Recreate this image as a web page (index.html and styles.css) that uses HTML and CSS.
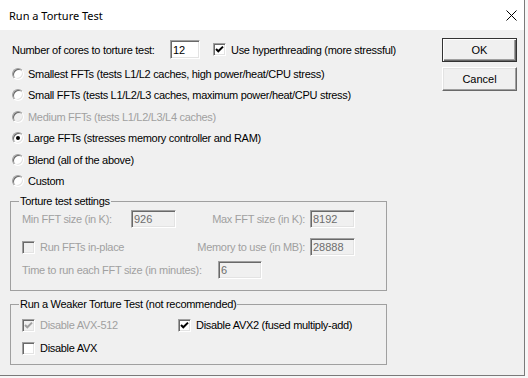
FILE: index.html
```html
<!DOCTYPE html>
<html lang="en">
<head>
    <meta charset="UTF-8">
    <title>Run a Torture Test</title>
    <link rel="stylesheet" href="styles.css">
</head>
<body>
    <div class="window">
        <div class="titlebar">
            <span class="title">Run a Torture Test</span>
            <svg class="close" width="11" height="11" viewBox="0 0 11 11">
                <path d="M0.5 0.5L10.5 10.5M10.5 0.5L0.5 10.5" stroke="#000" stroke-width="1"/>
            </svg>
        </div>

        <div class="dialog">
            <div class="main">
                <div class="cores-row">
                    <span class="cores-label">Number of cores to torture test:</span>
                    <input class="edit cores-edit" type="text" value="12">
                    <span class="check checked ht-check">
                        <svg width="9" height="9" viewBox="0 0 9 9"><path d="M1 4L3.3 6.3L8 1.6" stroke="#000" stroke-width="2" fill="none"/></svg>
                    </span>
                    <span class="check-text">Use hyperthreading (more stressful)</span>
                </div>

                <div class="option first">
                    <span class="radio"></span>
                    <span class="option-text">Smallest FFTs (tests L1/L2 caches, high power/heat/CPU stress)</span>
                </div>
                <div class="option">
                    <span class="radio"></span>
                    <span class="option-text">Small FFTs (tests L1/L2/L3 caches, maximum power/heat/CPU stress)</span>
                </div>
                <div class="option disabled">
                    <span class="radio"></span>
                    <span class="option-text">Medium FFTs (tests L1/L2/L3/L4 caches)</span>
                </div>
                <div class="option">
                    <span class="radio selected"></span>
                    <span class="option-text">Large FFTs (stresses memory controller and RAM)</span>
                </div>
                <div class="option">
                    <span class="radio"></span>
                    <span class="option-text">Blend (all of the above)</span>
                </div>
                <div class="option">
                    <span class="radio"></span>
                    <span class="option-text">Custom</span>
                </div>

                <fieldset class="group settings">
                    <legend>Torture test settings</legend>
                    <div class="fft-grid">
                        <span class="dim">Min FFT size (in K):</span>
                        <input class="edit" type="text" value="926" disabled>
                        <span class="dim right">Max FFT size (in K):</span>
                        <input class="edit" type="text" value="8192" disabled>

                        <div class="check-row span2">
                            <span class="check off"></span>
                            <span class="check-text dim">Run FFTs in-place</span>
                        </div>
                        <span class="dim right">Memory to use (in MB):</span>
                        <input class="edit" type="text" value="28888" disabled>
                    </div>
                    <div class="time-row">
                        <span class="dim time-label">Time to run each FFT size (in minutes):</span>
                        <input class="edit" type="text" value="6" disabled>
                    </div>
                </fieldset>

                <fieldset class="group weaker">
                    <legend>Run a Weaker Torture Test (not recommended)</legend>
                    <div class="avx-row">
                        <div class="check-row avx512">
                            <span class="check checked off">
                                <svg width="9" height="9" viewBox="0 0 9 9"><path d="M1 4L3.3 6.3L8 1.6" stroke="#a0a0a0" stroke-width="2" fill="none"/></svg>
                            </span>
                            <span class="check-text dim">Disable AVX-512</span>
                        </div>
                        <div class="check-row">
                            <span class="check checked">
                                <svg width="9" height="9" viewBox="0 0 9 9"><path d="M1 4L3.3 6.3L8 1.6" stroke="#000" stroke-width="2" fill="none"/></svg>
                            </span>
                            <span class="check-text">Disable AVX2 (fused multiply-add)</span>
                        </div>
                    </div>
                    <div class="avx-row second">
                        <div class="check-row">
                            <span class="check"></span>
                            <span class="check-text">Disable AVX</span>
                        </div>
                    </div>
                </fieldset>
            </div>

            <div class="buttons">
                <button class="btn default">OK</button>
                <button class="btn">Cancel</button>
            </div>
        </div>
    </div>
</body>
</html>
```

FILE: styles.css
```css
body {
    margin: 0;
    padding: 0;
    background-color: #f7f7f7;
    font-family: "Liberation Sans", Arial, sans-serif;
    font-size: 11px;
    letter-spacing: -0.3px;
    color: #000;
}

.window {
    width: 524px;
    height: 375px;
    background-color: #f0f0f0;
    border-right: 1px solid #7a7a7a;
    border-bottom: 1px solid #7a7a7a;
}

.titlebar {
    height: 30px;
    background-color: #fff;
    display: flex;
    align-items: center;
    justify-content: space-between;
    padding: 0 7px 0 9px;
}

.title {
    font-family: "Noto Sans", sans-serif;
    font-size: 11px;
    letter-spacing: 0;
}

.close {
    display: block;
}

.dialog {
    display: flex;
    padding: 8px 0 0 10px;
}

.main {
    width: 377px;
}

.buttons {
    margin-left: 55px;
    display: flex;
    flex-direction: column;
    gap: 5px;
}

/* edit boxes */
.edit {
    box-sizing: border-box;
    height: 18px;
    margin: 0;
    padding: 0 2px;
    font-family: "Liberation Sans", Arial, sans-serif;
    font-size: 11px;
    color: #000;
    background-color: #fff;
    border: 1px solid;
    border-color: #a0a0a0 #fff #fff #a0a0a0;
    box-shadow: inset 1px 1px 0 #696969, inset -1px -1px 0 #e3e3e3;
    outline: none;
}

.edit:disabled {
    background-color: #f0f0f0;
    color: #6d6d6d;
}

/* top row */
.cores-row {
    display: flex;
    align-items: center;
    height: 19px;
    margin-top: 2px;
    padding-left: 2px;
}

.cores-label {
    width: 158px;
    flex-shrink: 0;
    white-space: nowrap;
}

.cores-edit {
    width: 30px;
    height: 19px;
}

.ht-check {
    margin-left: 13px;
}

/* checkboxes */
.check {
    box-sizing: border-box;
    width: 13px;
    height: 13px;
    display: flex;
    align-items: center;
    justify-content: center;
    background-color: #fff;
    border: 1px solid;
    border-color: #a0a0a0 #fff #fff #a0a0a0;
    box-shadow: inset 1px 1px 0 #696969, inset -1px -1px 0 #e3e3e3;
    flex-shrink: 0;
}

.check.off {
    background-color: #f0f0f0;
}

.check svg {
    display: block;
}

.check-text {
    margin-left: 5px;
    white-space: nowrap;
}

.check-row {
    display: flex;
    align-items: center;
    height: 16px;
}

/* radio options */
.option {
    display: flex;
    align-items: center;
    height: 21.5px;
    padding-left: 2px;
}

.option.first {
    margin-top: 4px;
}

.radio {
    box-sizing: border-box;
    width: 12px;
    height: 12px;
    border-radius: 50%;
    background-color: #fff;
    border: 1px solid;
    border-color: #a0a0a0 #fff #fff #a0a0a0;
    box-shadow: inset 1px 1px 0 #696969, inset -1px -1px 0 #e3e3e3;
    display: flex;
    align-items: center;
    justify-content: center;
}

.radio.selected::after {
    content: "";
    width: 4px;
    height: 4px;
    border-radius: 50%;
    background-color: #000;
}

.option.disabled .radio {
    background-color: #f0f0f0;
}

.option-text {
    margin-left: 4px;
    white-space: nowrap;
}

.option.disabled .option-text,
.dim {
    color: #a0a0a0;
}

/* group boxes */
.group {
    box-sizing: border-box;
    width: 377px;
    margin: 0;
    padding: 0 0 0 11px;
    border: 1px solid #a0a0a0;
    min-inline-size: 0;
}

.group legend {
    padding: 0 1px;
    margin-left: -3px;
    line-height: 13px;
}

.settings {
    margin-top: 2.5px;
    padding-bottom: 10.5px;
}

.fft-grid {
    display: grid;
    grid-template-columns: 109px 45px 134px 45px;
    grid-auto-rows: 18px;
    row-gap: 10px;
    align-items: center;
    margin-top: 2.5px;
}

.fft-grid .edit {
    width: 45px;
}

.span2 {
    grid-column: span 2;
}

.right {
    text-align: right;
    padding-right: 5px;
}

.time-row {
    display: flex;
    align-items: center;
    height: 18px;
    margin-top: 5px;
}

.time-label {
    width: 196px;
}

.time-row .edit {
    width: 44px;
}

.weaker {
    margin-top: 7px;
    padding-bottom: 7.5px;
}

.avx-row {
    display: flex;
    margin-top: 6.5px;
}

.avx-row.second {
    margin-top: 7px;
}

.avx512 {
    width: 156px;
}

/* buttons */
.btn {
    box-sizing: border-box;
    width: 75px;
    height: 24px;
    padding: 0;
    font-family: "Liberation Sans", Arial, sans-serif;
    font-size: 11px;
    color: #000;
    background-color: #f0f0f0;
    border: 1px solid;
    border-color: #fff #696969 #696969 #fff;
    box-shadow: inset -1px -1px 0 #a0a0a0, inset 1px 1px 0 #e3e3e3;
}

.btn.default {
    border: 1px solid #333;
    box-shadow: inset 1px 1px 0 #fff, inset -1px -1px 0 #696969, inset -2px -2px 0 #a0a0a0;
}
```
